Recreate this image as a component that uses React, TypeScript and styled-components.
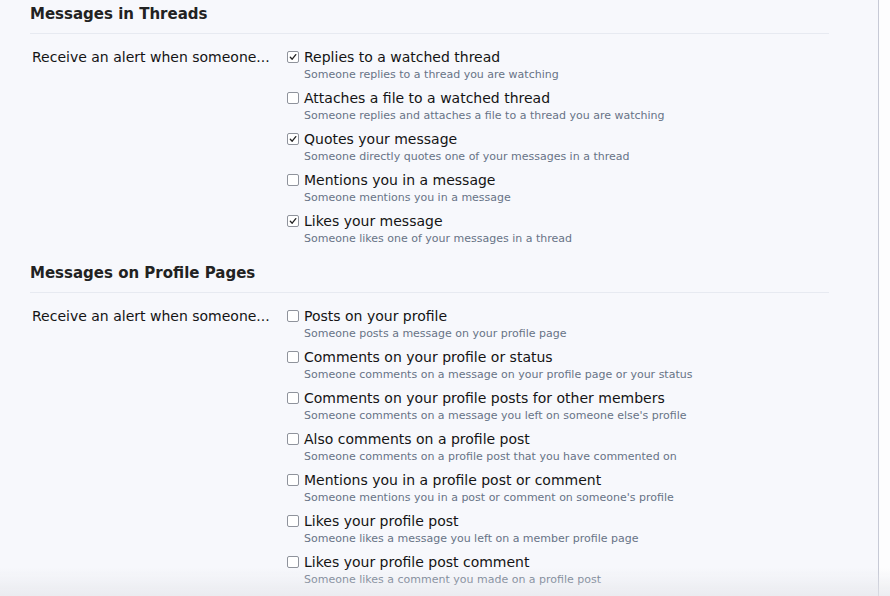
import React from 'react';
import styled, { createGlobalStyle } from 'styled-components';

const GlobalStyle = createGlobalStyle`
  html, body {
    margin: 0;
    padding: 0;
    background: #fdfdfe;
    font-family: "DejaVu Sans", Verdana, sans-serif;
    color: #141414;
  }
`;

const Page = styled.div`
  display: flex;
  min-height: 596px;
`;

const Main = styled.div`
  width: 879px;
  box-sizing: border-box;
  background: #f7f8fc;
  border-right: 1px solid #c7cad6;
  padding: 5px 49px 0 30px;
`;

const SectionTitle = styled.h3`
  margin: 0;
  padding-bottom: 9px;
  border-bottom: 1px solid #e7eaf1;
  font-size: 15px;
  line-height: 19px;
  font-weight: bold;
  color: #222;
`;

const Row = styled.div`
  display: grid;
  grid-template-columns: 256px 1fr;
  padding: 14px 0 18px;
`;

const RowLabel = styled.div`
  padding-left: 2px;
  font-size: 14px;
  line-height: 18px;
`;

const OptionList = styled.ul`
  list-style: none;
  margin: 0;
  padding: 0;
  display: flex;
  flex-direction: column;
  gap: 7px;
`;

const Option = styled.li`
  display: flex;
  flex-direction: column;
`;

const OptionLine = styled.label`
  display: flex;
  align-items: center;
  gap: 5px;
  font-size: 14px;
  line-height: 18px;
`;

const Box = styled.span<{ checked?: boolean }>`
  width: 10px;
  height: 10px;
  margin-left: 1px;
  border: 1px solid #8f939c;
  border-radius: 2px;
  background: #fff;
  display: flex;
  align-items: center;
  justify-content: center;
  flex: none;
  svg {
    width: 8px;
    height: 8px;
  }
`;

const Hint = styled.div`
  margin: 2px 0 0 18px;
  font-size: 11px;
  line-height: 14px;
  color: #677386;
`;

const BottomShade = styled.div`
  position: fixed;
  left: 0;
  right: 0;
  bottom: 0;
  height: 28px;
  background: linear-gradient(to bottom, rgba(228, 229, 234, 0), rgba(228, 229, 234, 0.65));
  pointer-events: none;
`;

type Item = { title: string; hint: string; checked?: boolean };

const threads: Item[] = [
  { title: 'Replies to a watched thread', hint: 'Someone replies to a thread you are watching', checked: true },
  { title: 'Attaches a file to a watched thread', hint: 'Someone replies and attaches a file to a thread you are watching' },
  { title: 'Quotes your message', hint: 'Someone directly quotes one of your messages in a thread', checked: true },
  { title: 'Mentions you in a message', hint: 'Someone mentions you in a message' },
  { title: 'Likes your message', hint: 'Someone likes one of your messages in a thread', checked: true },
];

const profile: Item[] = [
  { title: 'Posts on your profile', hint: 'Someone posts a message on your profile page' },
  { title: 'Comments on your profile or status', hint: 'Someone comments on a message on your profile page or your status' },
  { title: 'Comments on your profile posts for other members', hint: "Someone comments on a message you left on someone else's profile" },
  { title: 'Also comments on a profile post', hint: 'Someone comments on a profile post that you have commented on' },
  { title: 'Mentions you in a profile post or comment', hint: "Someone mentions you in a post or comment on someone's profile" },
  { title: 'Likes your profile post', hint: 'Someone likes a message you left on a member profile page' },
  { title: 'Likes your profile post comment', hint: 'Someone likes a comment you made on a profile post' },
];

const Check = () => (
  <svg viewBox="0 0 8 8" fill="none" stroke="#222" strokeWidth="1.3" strokeLinecap="round" strokeLinejoin="round">
    <path d="M1.3 4.2 L3.2 6.2 L6.8 1.6" />
  </svg>
);

const Section: React.FC<{ title: string; items: Item[] }> = ({ title, items }) => (
  <>
    <SectionTitle>{title}</SectionTitle>
    <Row>
      <RowLabel>Receive an alert when someone...</RowLabel>
      <OptionList>
        {items.map((it) => (
          <Option key={it.title}>
            <OptionLine>
              <Box checked={it.checked}>{it.checked ? <Check /> : null}</Box>
              {it.title}
            </OptionLine>
            <Hint>{it.hint}</Hint>
          </Option>
        ))}
      </OptionList>
    </Row>
  </>
);

export default function App() {
  return (
    <Page>
      <GlobalStyle />
      <Main>
        <Section title="Messages in Threads" items={threads} />
        <Section title="Messages on Profile Pages" items={profile} />
      </Main>
      <BottomShade />
    </Page>
  );
}
